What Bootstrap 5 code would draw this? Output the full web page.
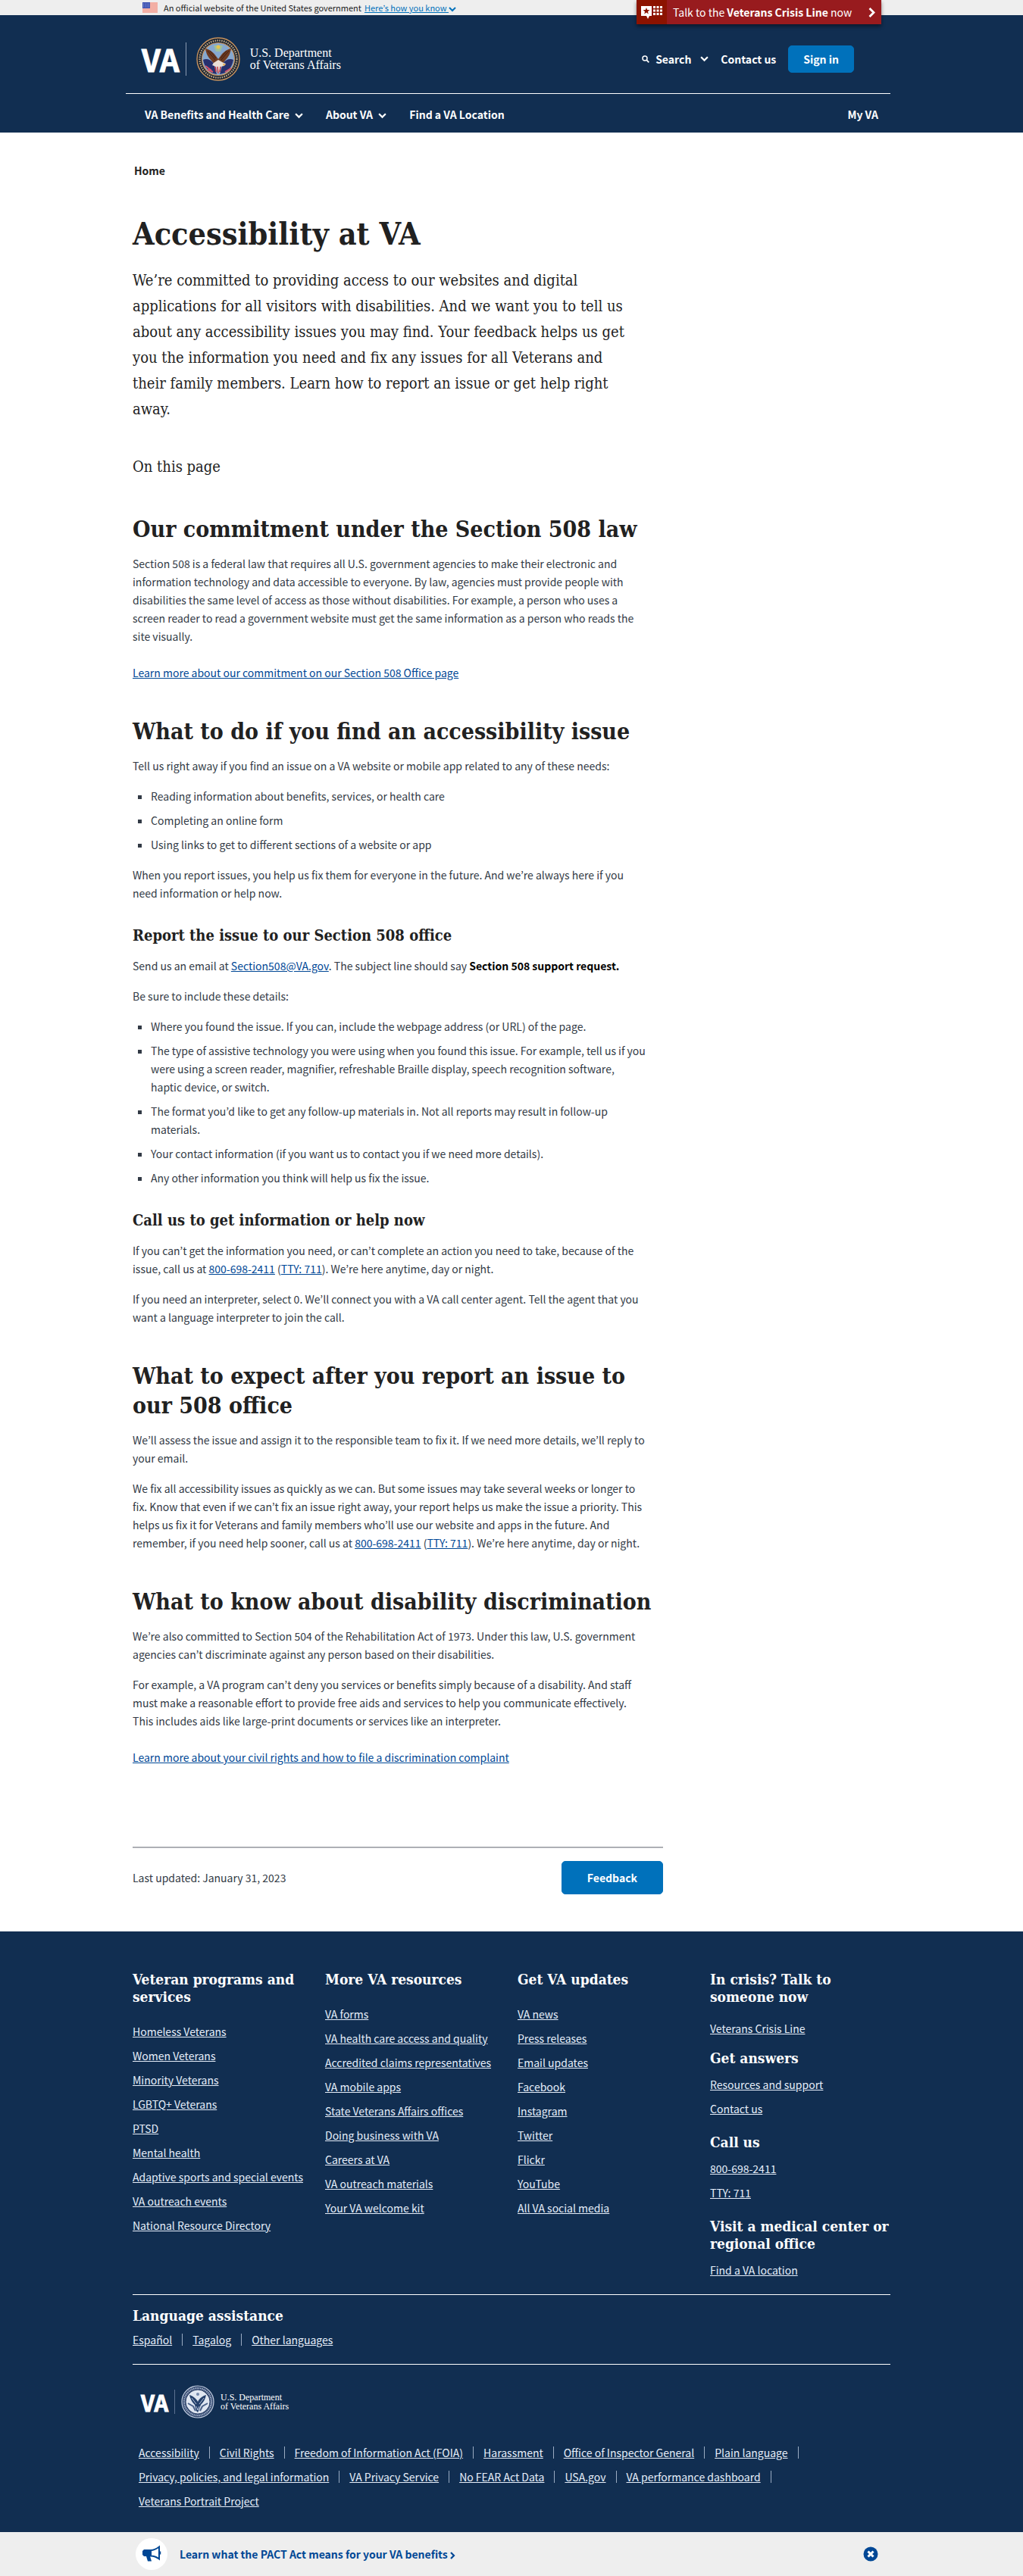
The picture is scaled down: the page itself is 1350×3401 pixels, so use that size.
<!DOCTYPE html>
<html lang="en">
<head>
<meta charset="utf-8">
<meta name="viewport" content="width=device-width, initial-scale=1">
<title>Accessibility at VA | Veterans Affairs</title>
<link href="https://cdn.jsdelivr.net/npm/bootstrap@5.3.0/dist/css/bootstrap.min.css" rel="stylesheet">
<style>
:root{--va-navy:#112e51;--va-blue:#0071bb;--va-link:#004795;--va-ink:#212121;--va-pale:#e6eefa;
  --va-sans:"Noto Sans CJK KR","Source Sans Pro",sans-serif;--va-slab:"DejaVu Serif Condensed","DejaVu Serif",serif}
body{font-family:var(--va-sans);font-size:14px;line-height:24px;color:#323a45;background:#fff}
a{color:var(--va-link)}
.shell{max-width:1000px;margin-left:auto;margin-right:auto}
.gov-bar{background:#eee;height:20px;font-size:11px;line-height:20px;color:var(--va-ink)}
.gov-bar .shell{padding-left:13px}
.plain-btn{background:none;border:0;padding:0;color:inherit;font:inherit}
.gov-bar .plain-btn{color:var(--va-blue)}
.crisis{position:absolute;top:0;right:12px;z-index:2;width:323px;height:32px;background:#981b1e;color:#fff;font-size:14px;box-shadow:0 3px 5px rgba(0,0,0,.45)}
.crisis:hover{color:#fff}
.crisis-mark{width:40px;background:#8c1300}
.site-head{background:var(--va-navy);color:#fff;font-weight:700}
.site-head a{color:#fff}
.head-top{height:103px;padding:12px 48px 0 12px}
.head-line{height:1px;background:#fff;margin-left:-9px}
.head-nav{height:51px;padding:3px 16px 0;gap:30px}
.brand-va{font-weight:700;font-size:40px;line-height:44px;color:#fff;-webkit-text-stroke:1px #fff}
.brand-rule{width:1px;height:44px;background:#8c9cb2}
.brand-name{font-family:"Liberation Serif",serif;font-weight:400;font-size:16px;line-height:16px;color:#fff}
.btn-va{--bs-btn-bg:var(--va-blue);--bs-btn-border-color:var(--va-blue);--bs-btn-color:#fff;--bs-btn-hover-bg:#205493;--bs-btn-hover-color:#fff;--bs-btn-font-weight:700;--bs-btn-font-size:14px;--bs-btn-border-radius:5px;--bs-btn-line-height:24px;--bs-btn-padding-y:5px;--bs-btn-padding-x:19px}
.btn-feedback{--bs-btn-padding-y:9px;--bs-btn-padding-x:33px}
.crumbs{padding:38px 2px 0;font-weight:700}
.crumbs a{color:var(--va-ink)}
.page-body{max-width:700px;padding-top:46px}
.page-body h1,.page-body h2,.page-body h3,.foot-title{font-family:var(--va-slab);font-weight:700;color:var(--va-ink)}
.page-body h1{font-size:41px;line-height:52px;margin:0 0 18px}
.page-body h2{font-size:30px;line-height:39px;margin:46px 0 14px}
.page-body h3{font-size:20px;line-height:26px;margin:31px 0 15px}
.page-body p{margin:0 0 16px;max-width:678px}
.page-body .intro{font-family:var(--va-slab);font-size:20px;line-height:34px;color:var(--va-ink);max-width:656px}
.page-body .onpage{margin:42px 0 0}
.page-body .more{margin:24px 0 0}
.dots{list-style:square;padding-left:24px;margin:0 0 16px;max-width:678px}
.dots li+li{margin-top:8px}
.updated{border-top:2px solid #aeb0b5;margin-top:106px;padding:17px 0 49px}
.site-foot{background:var(--va-navy);color:var(--va-pale);padding:52px 0 29px}
.site-foot a{color:var(--va-pale)}
.foot-title{font-size:19px;line-height:23px;margin:0}
.site-foot .foot-title{color:#fff}
.site-foot .after-one{margin-top:16px}
.site-foot .after-many{margin-top:21px}
.link-stack{display:flex;flex-direction:column;gap:8px;align-items:flex-start;margin-top:22px}
.link-stack.near{margin-top:18px}
.link-stack.tight{margin-top:11px}
.foot-rule{border-top:1px solid #fff;margin-top:20px}
.pipes{list-style:none;margin:0;padding:0;display:flex;flex-wrap:wrap;row-gap:8px}
.pipes li{display:flex;align-items:center}
.pipes li.sep::after{content:"";width:1px;height:16px;background:#9aabc2;margin:0 13px}
.foot-brand{padding:27px 0 33px 11px}
.foot-brand .brand-va{font-size:29px;line-height:32px}
.foot-brand .brand-rule{height:32px;background:#5c7190}
.foot-brand .brand-name{font-size:12px;line-height:12px}
.legal{padding:0 90px 0 8px}
.promo{background:#eee;height:58px;font-weight:700}
.promo a{color:var(--va-link)}
.promo-icon{width:42px;height:42px;background:#fff}
</style>
</head>
<body>
<svg width="0" height="0" class="position-absolute" aria-hidden="true">
  <symbol id="chev" viewBox="0 0 10 7"><path d="M1 1l4 4 4-4" fill="none" stroke="currentColor" stroke-width="2"/></symbol>
</svg>

<div class="gov-bar">
  <div class="shell d-flex align-items-center position-relative h-100">
    <svg width="20" height="14" viewBox="0 0 20 14" class="me-2" aria-label="U.S. flag">
      <rect width="20" height="14" fill="#fff"/>
      <path d="M0 1h20M0 3h20M0 5h20M0 7h20M0 9h20M0 11h20M0 13h20" stroke="#e8604a" stroke-width="1.1"/>
      <rect width="10" height="8" fill="#3a4fb0"/>
      <path d="M1 2h8M1 4h8M1 6h8" stroke="#b9c4ee" stroke-width=".8" stroke-dasharray="1 1.3"/>
    </svg>
    <span class="me-1">An official website of the United States government</span>
    <button type="button" class="plain-btn text-decoration-underline">Here’s how you know <svg width="10" height="7" aria-hidden="true"><use href="#chev"/></svg></button>
    <a href="#" class="crisis d-flex align-items-center text-decoration-none">
      <span class="crisis-mark h-100 d-flex align-items-center justify-content-center">
        <svg width="30" height="20" viewBox="0 0 30 20" aria-hidden="true">
          <path d="M1 2h14v13h-3l-2 4-2-4H1z" fill="#fff"/>
          <path d="M8 4l1.2 3.1 3.3.1-2.6 2 .9 3.2L8 10.600l-2.800 1.800.9-3.200-2.600-2 3.300-.1z" fill="#8c1300"/>
          <g fill="#fff"><rect x="17" y="2" width="3" height="3"/><rect x="21.500" y="2" width="3" height="3"/><rect x="26" y="2" width="3" height="3"/><rect x="17" y="6.500" width="3" height="3"/><rect x="21.500" y="6.500" width="3" height="3"/><rect x="26" y="6.500" width="3" height="3"/><rect x="17" y="11" width="3" height="3"/><rect x="21.500" y="11" width="3" height="3"/><rect x="26" y="11" width="3" height="3"/></g>
        </svg>
      </span>
      <span class="ps-2">Talk to the <strong>Veterans Crisis Line</strong> now</span>
      <svg width="9" height="13" viewBox="0 0 9 13" class="ms-auto me-2" aria-hidden="true"><path d="M1.500 1l5.500 5.500-5.500 5.500" fill="none" stroke="#fff" stroke-width="2.800"/></svg>
    </a>
  </div>
</div>

<header class="site-head">
  <div class="shell">
    <div class="head-top d-flex align-items-center">
      <a href="#" class="d-flex align-items-center text-decoration-none" aria-label="VA home">
        <span class="brand-va">VA</span>
        <span class="brand-rule ms-2 me-2"></span>
        <svg width="60" height="60" viewBox="0 0 60 60" class="mx-1" aria-hidden="true">
          <circle cx="30" cy="30" r="28" fill="#16202f" stroke="#c8935e" stroke-width="1.400"/>
          <circle cx="30" cy="30" r="24.500" fill="none" stroke="#b9a384" stroke-width="2.500" stroke-dasharray="1.600 1.300"/>
          <circle cx="30" cy="30" r="21.500" fill="#86a8cf" stroke="#c8935e" stroke-width="1.200"/>
          <path d="M10 31c4-2 10-1 14 5l4 14c-9-1-16-8-18-19z" fill="#27306e"/>
          <path d="M50 31c-4-2-10-1-14 5l-4 14c9-1 16-8 18-19z" fill="#27306e"/>
          <path d="M13 39l8 6M16 44l7 3M39 47l8-5" stroke="#d3546a" stroke-width="2"/>
          <path d="M24 12h12l-3 8h-6z" fill="#9fbf9a"/><circle cx="30" cy="14" r="2.500" fill="#e6c64d"/>
          <path d="M13 16c5 1 11 5 14 10l3 4 3-4c3-5 9-9 14-10-1 6-3 11-8 16l-5 6-4 2-4-2-5-6c-5-5-7-10-8-16z" fill="#6e3b22"/>
          <path d="M16 19l10 12M19 19l8 10M44 19L34 31M41 19l-8 10" stroke="#3d1e12" stroke-width="1"/>
          <path d="M24 35l6-4 7 4 3 1-2 3-5 1-3 9-3-9-5-2z" fill="#eadfd6"/>
          <path d="M26 40l1 7M29 40l1 9M33 40l-1 7" stroke="#c83a44" stroke-width="1.500"/>
          <path d="M36 36l4 1-3 2z" fill="#e7a43a"/>
        </svg>
        <span class="brand-name ms-2">U.S. Department<br>of Veterans Affairs</span>
      </a>
      <div class="ms-auto d-flex align-items-center">
        <button type="button" class="plain-btn d-flex align-items-center">
          <svg width="10" height="10" viewBox="0 0 10 10" aria-hidden="true"><circle cx="4" cy="4" r="3" fill="none" stroke="#fff" stroke-width="1.500"/><path d="M6.200 6.200L9.300 9.300" stroke="#fff" stroke-width="1.800"/></svg>
          <span class="mx-2 pe-1">Search</span><svg width="11" height="8" aria-hidden="true"><use href="#chev"/></svg>
        </button>
        <a href="#" class="text-decoration-none mx-3">Contact us</a>
        <button type="button" class="btn btn-va">Sign in</button>
      </div>
    </div>
    <div class="head-line"></div>
    <nav class="head-nav d-flex align-items-center" aria-label="Main">
      <button type="button" class="plain-btn">VA Benefits and Health Care <svg width="11" height="8" class="ms-1" aria-hidden="true"><use href="#chev"/></svg></button>
      <button type="button" class="plain-btn">About VA <svg width="11" height="8" class="ms-1" aria-hidden="true"><use href="#chev"/></svg></button>
      <a href="#" class="text-decoration-none">Find a VA Location</a>
      <a href="#" class="text-decoration-none ms-auto">My VA</a>
    </nav>
  </div>
</header>

<main class="shell">
  <nav class="crumbs" aria-label="Breadcrumb"><a href="#" class="text-decoration-none">Home</a></nav>
  <article class="page-body">
    <h1>Accessibility at VA</h1>
    <p class="intro">We’re committed to providing access to our websites and digital applications for all visitors with disabilities. And we want you to tell us about any accessibility issues you may find. Your feedback helps us get you the information you need and fix any issues for all Veterans and their family members. Learn how to report an issue or get help right away.</p>
    <p class="intro onpage">On this page</p>

    <h2>Our commitment under the Section 508 law</h2>
    <p>Section 508 is a federal law that requires all U.S. government agencies to make their electronic and information technology and data accessible to everyone. By law, agencies must provide people with disabilities the same level of access as those without disabilities. For example, a person who uses a screen reader to read a government website must get the same information as a person who reads the site visually.</p>
    <p class="more"><a href="#">Learn more about our commitment on our Section 508 Office page</a></p>

    <h2>What to do if you find an accessibility issue</h2>
    <p>Tell us right away if you find an issue on a VA website or mobile app related to any of these needs:</p>
    <ul class="dots">
      <li>Reading information about benefits, services, or health care</li>
      <li>Completing an online form</li>
      <li>Using links to get to different sections of a website or app</li>
    </ul>
    <p>When you report issues, you help us fix them for everyone in the future. And we’re always here if you need information or help now.</p>

    <h3>Report the issue to our Section 508 office</h3>
    <p>Send us an email at <a href="#">Section508@VA.gov</a>. The subject line should say <strong class="text-black">Section 508 support request.</strong></p>
    <p>Be sure to include these details:</p>
    <ul class="dots">
      <li>Where you found the issue. If you can, include the webpage address (or URL) of the page.</li>
      <li>The type of assistive technology you were using when you found this issue. For example, tell us if you were using a screen reader, magnifier, refreshable Braille display, speech recognition software, haptic device, or switch.</li>
      <li>The format you’d like to get any follow-up materials in. Not all reports may result in follow-up materials.</li>
      <li>Your contact information (if you want us to contact you if we need more details).</li>
      <li>Any other information you think will help us fix the issue.</li>
    </ul>

    <h3>Call us to get information or help now</h3>
    <p>If you can’t get the information you need, or can’t complete an action you need to take, because of the issue, call us at <a href="#">800-698-2411</a> (<a href="#">TTY: 711</a>). We’re here anytime, day or night.</p>
    <p>If you need an interpreter, select 0. We’ll connect you with a VA call center agent. Tell the agent that you want a language interpreter to join the call.</p>

    <h2>What to expect after you report an issue to our 508 office</h2>
    <p>We’ll assess the issue and assign it to the responsible team to fix it. If we need more details, we’ll reply to your email.</p>
    <p>We fix all accessibility issues as quickly as we can. But some issues may take several weeks or longer to fix. Know that even if we can’t fix an issue right away, your report helps us make the issue a priority. This helps us fix it for Veterans and family members who’ll use our website and apps in the future. And remember, if you need help sooner, call us at <a href="#">800-698-2411</a> (<a href="#">TTY: 711</a>). We’re here anytime, day or night.</p>

    <h2>What to know about disability discrimination</h2>
    <p>We’re also committed to Section 504 of the Rehabilitation Act of 1973. Under this law, U.S. government agencies can’t discriminate against any person based on their disabilities.</p>
    <p>For example, a VA program can’t deny you services or benefits simply because of a disability. And staff must make a reasonable effort to provide free aids and services to help you communicate effectively. This includes aids like large-print documents or services like an interpreter.</p>
    <p class="more"><a href="#">Learn more about your civil rights and how to file a discrimination complaint</a></p>

    <div class="updated d-flex align-items-center justify-content-between">
      <span>Last updated: January 31, 2023</span>
      <button type="button" class="btn btn-va btn-feedback">Feedback</button>
    </div>
  </article>
</main>

<footer class="site-foot">
  <div class="shell">
    <div class="row gx-3">
      <div class="col-3">
        <h2 class="foot-title">Veteran programs and services</h2>
        <div class="link-stack text-nowrap">
          <a href="#">Homeless Veterans</a><a href="#">Women Veterans</a><a href="#">Minority Veterans</a><a href="#">LGBTQ+ Veterans</a><a href="#">PTSD</a><a href="#">Mental health</a><a href="#">Adaptive sports and special events</a><a href="#">VA outreach events</a><a href="#">National Resource Directory</a>
        </div>
      </div>
      <div class="col-3">
        <h2 class="foot-title">More VA resources</h2>
        <div class="link-stack">
          <a href="#">VA forms</a><a href="#">VA health care access and quality</a><a href="#">Accredited claims representatives</a><a href="#">VA mobile apps</a><a href="#">State Veterans Affairs offices</a><a href="#">Doing business with VA</a><a href="#">Careers at VA</a><a href="#">VA outreach materials</a><a href="#">Your VA welcome kit</a>
        </div>
      </div>
      <div class="col-3">
        <h2 class="foot-title">Get VA updates</h2>
        <div class="link-stack">
          <a href="#">VA news</a><a href="#">Press releases</a><a href="#">Email updates</a><a href="#">Facebook</a><a href="#">Instagram</a><a href="#">Twitter</a><a href="#">Flickr</a><a href="#">YouTube</a><a href="#">All VA social media</a>
        </div>
      </div>
      <div class="col-3">
        <h2 class="foot-title">In crisis? Talk to<br>someone now</h2>
        <div class="link-stack near"><a href="#">Veterans Crisis Line</a></div>
        <h2 class="foot-title after-one">Get answers</h2>
        <div class="link-stack tight"><a href="#">Resources and support</a><a href="#">Contact us</a></div>
        <h2 class="foot-title after-many">Call us</h2>
        <div class="link-stack tight"><a href="#">800-698-2411</a><a href="#">TTY: 711</a></div>
        <h2 class="foot-title after-many">Visit a medical center or regional office</h2>
        <div class="link-stack tight"><a href="#">Find a VA location</a></div>
      </div>
    </div>
    <div class="foot-rule pt-3">
      <h2 class="foot-title">Language assistance</h2>
      <ul class="pipes mt-2">
        <li class="sep"><a href="#">Español</a></li><li class="sep"><a href="#">Tagalog</a></li><li><a href="#">Other languages</a></li>
      </ul>
    </div>
    <div class="foot-rule">
      <div class="foot-brand d-flex align-items-center">
        <span class="brand-va">VA</span>
        <span class="brand-rule mx-2"></span>
        <svg width="44" height="44" viewBox="0 0 44 44" aria-hidden="true">
          <circle cx="22" cy="22" r="21" fill="#33486e" stroke="#c3cee0" stroke-width="1.200"/>
          <circle cx="22" cy="22" r="18" fill="none" stroke="#a9b7cf" stroke-width="2.200" stroke-dasharray="1.300 1"/>
          <circle cx="22" cy="22" r="15" fill="#dfe6f1" stroke="#e9eef6"/>
          <path d="M11 13c4 1 8 4 10 7l1 2 1-2c2-3 6-6 10-7-1 5-3 9-7 13l-3 8-1 2-2-2-2-8c-4-4-6-8-7-13z" fill="#24406b"/>
          <path d="M9 24l7 4 3 6M35 24l-7 4-3 6" stroke="#4a618a" stroke-width="2" fill="none"/>
          <path d="M14 17l6 8M30 17l-6 8M20 28l2 5 2-5" stroke="#b4c1d8" stroke-width="1" fill="none"/>
          <circle cx="22" cy="12" r="2" fill="#7388ab"/>
        </svg>
        <span class="brand-name ms-2">U.S. Department<br>of Veterans Affairs</span>
      </div>
      <ul class="pipes legal">
        <li class="sep"><a href="#">Accessibility</a></li><li class="sep"><a href="#">Civil Rights</a></li><li class="sep"><a href="#">Freedom of Information Act (FOIA)</a></li><li class="sep"><a href="#">Harassment</a></li><li class="sep"><a href="#">Office of Inspector General</a></li><li class="sep"><a href="#">Plain language</a></li><li class="sep"><a href="#">Privacy, policies, and legal information</a></li><li class="sep"><a href="#">VA Privacy Service</a></li><li class="sep"><a href="#">No FEAR Act Data</a></li><li class="sep"><a href="#">USA.gov</a></li><li class="sep"><a href="#">VA performance dashboard</a></li><li><a href="#">Veterans Portrait Project</a></li>
      </ul>
    </div>
  </div>
</footer>

<aside class="promo">
  <div class="shell d-flex align-items-center h-100 ps-1">
    <span class="promo-icon rounded-circle d-flex align-items-center justify-content-center me-3">
      <svg width="26" height="24" viewBox="0 0 26 24" aria-hidden="true"><path d="M3 6h9v9H11l2 6.500H8L6 15H3L1 13V8z" fill="#004795"/><path d="M12 7c4 0 7-1.500 11-4.500v16C19 15.500 16 14.500 12 14.500z" fill="none" stroke="#004795" stroke-width="2"/><path d="M24 8.500v4" stroke="#004795" stroke-width="2.500"/></svg>
    </span>
    <a href="#" class="text-decoration-none">Learn what the PACT Act means for your VA benefits <svg width="7" height="10" viewBox="0 0 7 10" aria-hidden="true"><path d="M1 1l4 4-4 4" fill="none" stroke="currentColor" stroke-width="2.200"/></svg></a>
    <button type="button" class="plain-btn ms-auto me-3 d-flex" aria-label="Dismiss">
      <svg width="20" height="20" viewBox="0 0 20 20" aria-hidden="true"><circle cx="10" cy="10" r="9.500" fill="#004795"/><path d="M6.500 6.500l7 7M13.500 6.500l-7 7" stroke="#fff" stroke-width="3"/></svg>
    </button>
  </div>
</aside>
<script src="https://cdn.jsdelivr.net/npm/bootstrap@5.3.0/dist/js/bootstrap.bundle.min.js"></script>
</body>
</html>
